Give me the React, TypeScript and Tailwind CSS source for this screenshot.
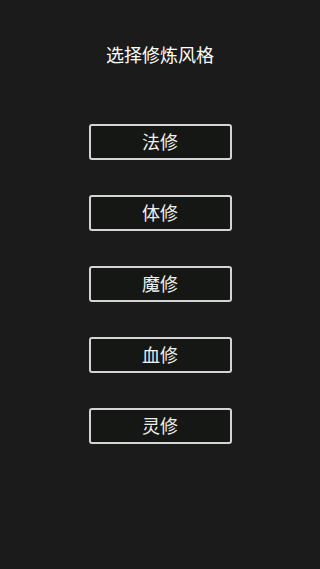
const styles = ['法修', '体修', '魔修', '血修', '灵修'];

export default function App() {
  return (
    <div
      className="flex min-h-[569px] w-full flex-col items-center bg-[#1b1b1b] pt-[41px] text-white"
      style={{ fontFamily: '"Noto Sans CJK SC", "Noto Sans", sans-serif' }}
    >
      <h1 className="text-[18px] leading-[27px] font-normal">选择修炼风格</h1>
      <div className="mt-[56px] flex flex-col gap-[35px]">
        {styles.map((s) => (
          <button
            key={s}
            className="flex h-[36px] w-[143px] items-center justify-center rounded-[3px] border-2 border-[#d4d4d4] bg-[#141714] pb-[3px] text-[18px] leading-none text-[#f0f0f0]"
          >
            {s}
          </button>
        ))}
      </div>
    </div>
  );
}
